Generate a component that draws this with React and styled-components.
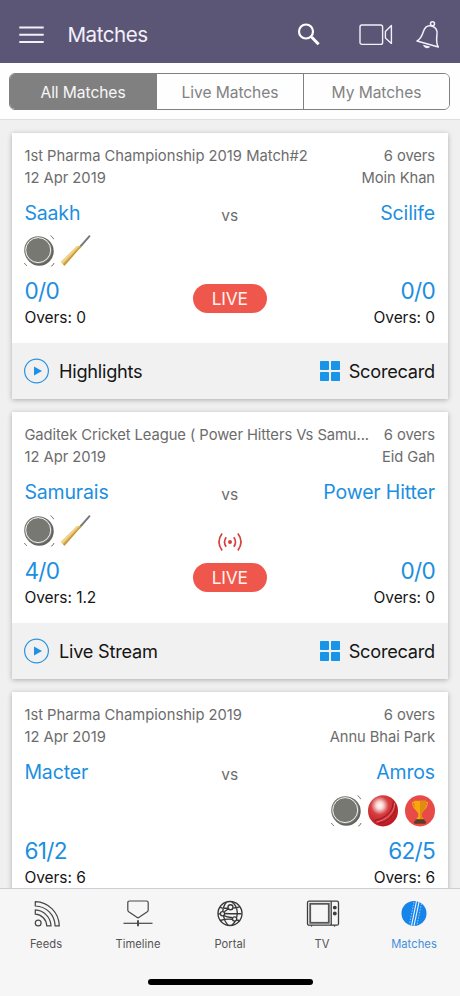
import React from "react";
import styled, { createGlobalStyle } from "styled-components";

const GlobalStyle = createGlobalStyle`
  * { box-sizing: border-box; }
  body { margin: 0; background: #f1f1f1; font-family: Inter, Roboto, sans-serif; }
`;

const Screen = styled.div`
  display: flex;
  flex-direction: column;
  width: 460px;
  height: 996px;
  overflow: hidden;
  background: #f0f0f0;
`;

const Header = styled.header`
  display: flex;
  align-items: center;
  flex: none;
  height: 63px;
  padding: 7px 19px 0 19px;
  background: #5c5676;
  color: #f4f0fb;
`;

const Title = styled.h1`
  flex: 1;
  margin: 0 0 0 23.5px;
  font-size: 20.6px;
  line-height: 26px;
  font-weight: 400;
  letter-spacing: -0.5px;
`;

const HeaderActions = styled.div`
  display: flex;
  align-items: center;
`;

const ActionIcon = styled.span`
  display: flex;
  margin-left: ${(p) => p.$gap}px;
`;

const FilterBar = styled.div`
  flex: none;
  height: 57px;
  padding: 10px 10px 0 9px;
  background: #fefefe;
  border-bottom: 1px solid #dedede;
`;

const Segments = styled.div`
  display: grid;
  grid-template-columns: 146px 147px 1fr;
  height: 37px;
  border: 1.5px solid #808080;
  border-radius: 6px;
  overflow: hidden;
`;

const Segment = styled.button`
  border: 0;
  border-left: ${(p) => (p.$first ? "0" : "1px solid #808080")};
  padding: 2px 0 0;
  font: 400 15.6px Inter, sans-serif;
  letter-spacing: -0.08px;
  background: ${(p) => (p.$active ? "#808080" : "#fefefe")};
  color: ${(p) => (p.$active ? "#f7f7f7" : "#828282")};
`;

const MatchList = styled.main`
  flex: 1;
  min-height: 0;
  overflow: hidden;
  display: flex;
  flex-direction: column;
  gap: 13.4px;
  padding: 12.7px 12px 0;
`;

const Card = styled.article`
  flex: none;
  height: 266.4px;
  display: flex;
  flex-direction: column;
  background: #fff;
  box-shadow: 0 1px 5px rgba(0, 0, 0, 0.28);
`;

const CardBody = styled.div`
  flex: 1;
  padding: 12px 13px 0 12.4px;
`;

const MetaRow = styled.div`
  display: flex;
  justify-content: space-between;
  height: 22px;
  line-height: 22px;
  font-size: 14.75px;
  letter-spacing: ${(p) => (p.$tight ? "-0.07px" : "-0.01px")};
  color: #6c6c6c;
  white-space: nowrap;

  span:last-child { letter-spacing: -0.08px; }
`;

const Versus = styled.div`
  display: grid;
  grid-template-columns: 1fr 74px 1fr;
  margin-top: 11px;
`;

const Side = styled.div`
  display: flex;
  flex-direction: column;
  align-items: ${(p) => (p.$right ? "flex-end" : "flex-start")};
`;

const Team = styled.div`
  height: 26px;
  line-height: 26px;
  font-size: 19.5px;
  letter-spacing: -0.15px;
  color: #1c8fe0;
  white-space: nowrap;
`;

const Badges = styled.div`
  display: flex;
  gap: 7px;
  height: 32px;
  margin: 9.500px 0 0 ${(p) => (p.$right ? "0" : "-0.6px")};
`;

const Score = styled.div`
  height: 30px;
  margin-top: 9px;
  line-height: 30px;
  font-size: 22.6px;
  letter-spacing: -0.7px;
  color: #1c8fe0;
`;

const Overs = styled.div`
  height: 22px;
  margin-top: 0.8px;
  line-height: 22px;
  font-size: 15.5px;
  letter-spacing: -0.05px;
  color: #161616;
`;

const Middle = styled.div`
  display: flex;
  flex-direction: column;
  align-items: center;
`;

const Vs = styled.div`
  margin-top: 4px;
  height: 24px;
  line-height: 24px;
  font-size: 15.5px;
  color: #6c6c6c;
`;

const SignalSlot = styled.div`
  display: flex;
  height: 56px;
  padding-top: 25px;
`;

const LivePill = styled.div`
  width: 74px;
  height: 29px;
  border-radius: 15px;
  background: #ef574d;
  color: #fff2ef;
  text-align: center;
  font-size: 17.4px;
  line-height: 29px;
  letter-spacing: -0.3px;
`;

const CardFooter = styled.footer`
  display: flex;
  align-items: center;
  justify-content: space-between;
  height: 56px;
  padding: 0 13px 0 12px;
  background: #f1f1f1;
`;

const FooterAction = styled.div`
  display: flex;
  align-items: center;
  gap: 9px;
  font-size: 18.2px;
  letter-spacing: -0.25px;
  color: #151515;
`;

const TabBar = styled.nav`
  flex: none;
  height: 108px;
  display: flex;
  flex-direction: column;
  align-items: center;
  background: #f6f6f7;
  border-top: 1px solid #cfcfd1;
  z-index: 1;
`;

const Tabs = styled.div`
  display: grid;
  grid-template-columns: repeat(5, 1fr);
  width: 460px;
  height: 90px;
`;

const Tab = styled.div`
  display: flex;
  flex-direction: column;
  align-items: center;
  padding-top: 11px;
  font-size: 11.2px;
  line-height: 16px;
  letter-spacing: 0.05px;
  color: ${(p) => (p.$active ? "#3f8fdb" : "#545454")};
  svg { margin-bottom: 8px; }
`;

const HomeIndicator = styled.div`
  width: 165px;
  height: 6px;
  border-radius: 3px;
  background: #000;
`;

const MenuIcon = () => (
  <svg width="25" height="20" viewBox="0 0 25 20" stroke="#f4f0fb" strokeWidth="2">
    <path d="M.3 2.5h24.4M.3 9.7h24.4M.3 17h24.4" />
  </svg>
);

const SearchIcon = () => (
  <svg width="24" height="24" viewBox="0 0 24 24" fill="none" stroke="#fff">
    <circle cx="9" cy="8.500" r="7" strokeWidth="2.200" />
    <path d="M14 13.500l1.800 1.800" strokeWidth="2.200" />
    <path d="M15 14.500l6.600 6.800" strokeWidth="3" />
  </svg>
);

const VideoIcon = () => (
  <svg width="34" height="24" viewBox="0 0 34 24" fill="none" stroke="#f4f0fb" strokeWidth="1.4" strokeLinejoin="round">
    <rect x="1" y="2" width="22.6" height="19.4" rx="2" />
    <path d="M32.4 2.6v17.8L26.4 15V8.4z" />
  </svg>
);

const BellIcon = () => (
  <svg width="26" height="30" viewBox="0 0 26 30" fill="none" stroke="#f4f0fb" strokeWidth="1.5" strokeLinejoin="round">
    <circle cx="17.5" cy="3.8" r="2" />
    <path d="M2 21C6 19 6.900 15.800 8.400 11.500c1.400-4.200 4.200-6.400 8.200-5.400 4 1 5.900 3.800 5.400 8.400-.5 4.700-1.300 8.500 1.300 12.500z" />
    <path d="M8 24.800c.8 4 6.300 4.400 7 1.700z" fill="#f4f0fb" stroke="none" />
  </svg>
);

const CoinBadge = () => (
  <svg width="30" height="32" viewBox="0 0 30 32" fill="none" overflow="visible">
    <circle cx="15.300" cy="16.300" r="14.400" fill="#62635f" />
    <circle cx="14.200" cy="15.200" r="14" fill="#777872" />
    <circle cx="14.200" cy="15.100" r="12.500" stroke="#f4f4f2" strokeWidth="1" />
    <path d="M26.500 .6q2.400 1.400 3.200 3.600M.4 28q.7 1.700 2.600 2.800M27.200 31.200q2.400-1 2.800-3.200" stroke="#777872" />
  </svg>
);

const BatBadge = () => (
  <svg width="30" height="32" viewBox="0 0 30 32" fill="none" overflow="visible">
    <path d="M18.500 12.500L28.500 1.200" stroke="#777" strokeWidth="1.900" strokeLinecap="round" />
    <path d="M20.800 11L3.500 30.800l-3.700-3.800L16 11z" fill="#dfb657" />
    <path d="M18 11.300L1.300 29l-1.500-2.100L16 11z" fill="#f1d48b" />
    <path d="M20.800 11L3.500 30.800l-1.300-1.200L19.400 11z" fill="#c49a46" />
  </svg>
);

const BallBadge = () => (
  <svg width="30" height="32" viewBox="0 0 30 32" fill="none">
    <defs>
      <radialGradient id="leather" cx=".39" cy=".33" r=".66">
        <stop offset="0" stopColor="#fff" />
        <stop offset=".18" stopColor="#f7d6d4" />
        <stop offset=".45" stopColor="#d73d40" />
        <stop offset="1" stopColor="#bd1821" />
      </radialGradient>
    </defs>
    <ellipse cx="15" cy="15.800" rx="15" ry="15.600" fill="url(#leather)" />
    <path d="M25.300 6.500C25.500 16 17 23.500 6.600 25.500" stroke="#931720" />
    <path d="M26.600 8C27 18 18 25.300 8.500 27" stroke="#e98b8b" strokeWidth=".8" />
    <path d="M28 10C28.200 19.500 20 27 10.500 28.500" stroke="#931720" strokeWidth=".9" />
  </svg>
);

const TrophyBadge = () => (
  <svg width="30" height="32" viewBox="0 0 30 32" fill="none">
    <ellipse cx="15" cy="15.800" rx="15" ry="15.600" fill="#e84a47" />
    <path d="M9.500 7.300H7.600c.2 4 1.700 7 5.300 8.300M20.500 7.300h1.900c-.2 4-1.700 7-5.300 8.300" stroke="#f0a318" strokeWidth="1.300" />
    <path d="M9 5.800h12c0 6-1.300 10.300-4.300 12.200v3.400l2.500 3h-8.400l2.500-3V18C10.300 16.100 9 11.800 9 5.800z" fill="#f5a70b" />
    <path d="M15 5.800h6c0 6-1.300 10.300-4.300 12.200v3.400l2.500 3H15z" fill="#df8c12" />
    <path d="M10.500 24.300h9v1.700h1.300v2.700H9.200V26h1.300z" fill="#5d3b2c" />
  </svg>
);

const SignalIcon = () => (
  <svg width="26" height="20" viewBox="0 0 26 20" fill="none" stroke="#d8403e" strokeWidth="1.700">
    <circle cx="13" cy="10" r="2" fill="#d8403e" stroke="none" />
    <path d="M9.200 5.200Q5.800 10 9.200 14.800M16.800 5.200Q20.200 10 16.800 14.800M5.100 1.600Q-1.200 10 5.100 18.400M20.900 1.600Q27.200 10 20.900 18.400" />
  </svg>
);

const PlayIcon = () => (
  <svg width="26" height="26" viewBox="0 0 26 26">
    <circle cx="12.500" cy="13" r="11.900" fill="none" stroke="#2a94df" strokeWidth="1.200" />
    <path d="M10 8.400L18 13l-8 4.600z" fill="#1c91e6" />
  </svg>
);

const GridIcon = () => (
  <svg width="20" height="20" viewBox="0 0 20 20" fill="#1895e8">
    <rect width="9" height="9" rx=".8" />
    <rect x="11" width="9" height="9" rx=".8" />
    <rect y="11" width="9" height="9" rx=".8" />
    <rect x="11" y="11" width="9" height="9" rx=".8" />
  </svg>
);

const FeedsIcon = () => (
  <svg width="26" height="28" viewBox="0 0 26 28" fill="none" overflow="visible" stroke="#484848" strokeWidth="1.250" strokeLinejoin="round">
    <g transform="translate(1 0)">
      <circle cx="4.200" cy="23" r="2.900" />
      <path d="M1.300 1.600C14.500 2 25 12.500 25.300 25.900h-4.200C20.800 14.800 12.400 6.300 1.300 6z" />
      <path d="M1.300 9.900c8.500.4 15.400 7.400 15.700 16h-4.200C12.500 19.500 7.700 14.500 1.300 14.200z" />
    </g>
  </svg>
);

const TimelineIcon = () => (
  <svg width="30" height="28" viewBox="0 0 30 28" fill="none" stroke="#484848" strokeWidth="1.200" strokeLinejoin="round">
    <path d="M6.500 1h17q1.700 0 1.700 1.700v7.300q0 1-.9 1.700L15 18 5.700 11.700q-.9-.7-.9-1.700V2.700q0-1.700 1.700-1.700z" />
    <path d="M.5 23.300h29" />
    <path d="M15 20.300v6" strokeWidth="1.900" />
  </svg>
);

const PortalIcon = () => (
  <svg width="26" height="28" viewBox="0 0 26 28" fill="none" stroke="#383838" strokeWidth="1.350">
    <circle cx="13" cy="13.500" r="12" />
    <path d="M9.500 2.300C7 5 6 8.500 5.700 12M6.300 15.300C7 19 8.500 22.500 11 25.400M14.800 1.900c2.500 1.700 5.200 5.700 5.500 10.800-.1 5.500-2.200 9.500-5.300 12.500M3 7.300c2 .8 5 1.100 8 .8M16.300 8c2.600 0 5-.4 6.800-1.300M1 13.800h2.500M7.500 13.500l5 .2h12M3.200 20.500c4-1.300 8-1.500 12-1.200M19.500 20c1.300.1 2.300.4 3.300.8M7.300 11.800l4.200-3M7.200 15.500c3 2.300 5.700 1.300 8.300 2.300" />
    <circle cx="13.500" cy="7.200" r="2.500" fill="#f6f6f7" />
    <circle cx="5.500" cy="13.700" r="2.100" fill="#f6f6f7" />
    <circle cx="17.600" cy="19" r="2.100" fill="#f6f6f7" />
  </svg>
);

const TvIcon = () => (
  <svg width="33" height="28" viewBox="0 0 33 28" fill="none" overflow="visible" stroke="#3d3d3d">
    <g transform="translate(.5 0)" strokeWidth="1.300">
      <rect x="1" y="1.200" width="31" height="24" rx="1.500" />
      <rect x="3.700" y="3.800" width="18.600" height="19" stroke="#555" strokeWidth="1.800" />
      <path d="M24.700 1.200v24" />
      <path d="M5.300 25.200l-.5 1.300M27.700 25.200l.5 1.300" />
      <circle cx="28.300" cy="7.600" r="1.300" fill="#3d3d3d" />
      <circle cx="28.300" cy="13.500" r="1.300" fill="#3d3d3d" />
    </g>
  </svg>
);

const MatchesIcon = () => (
  <svg width="26" height="28" viewBox="0 0 26 28" fill="none">
    <circle cx="13" cy="13.400" r="12.500" fill="#1684e8" />
    <path d="M15.500 1.200l-5 24.500M18 2.100l-5 23.700" stroke="#eaf4ff" strokeWidth="1.100" />
    <path d="M13 2l-4.600 22.500M20.500 3.500l-4.500 21.500" stroke="#b6dcff" strokeWidth=".8" strokeDasharray="1.500 1.300" />
  </svg>
);

const badgeIcons = { coin: CoinBadge, bat: BatBadge, ball: BallBadge, trophy: TrophyBadge };

const matches = [
  {
    name: "1st Pharma Championship 2019 Match#2", date: "12 Apr 2019", overs: "6 overs", ground: "Moin Khan",
    home: { team: "Saakh", badges: ["coin", "bat"], score: "0/0", overs: "0" },
    away: { team: "Scilife", badges: [], score: "0/0", overs: "0" },
    live: true, video: "Highlights",
  },
  {
    name: "Gaditek Cricket League ( Power Hitters Vs Samu...", date: "12 Apr 2019", overs: "6 overs", ground: "Eid Gah",
    home: { team: "Samurais", badges: ["coin", "bat"], score: "4/0", overs: "1.2" },
    away: { team: "Power Hitter", badges: [], score: "0/0", overs: "0" },
    live: true, streaming: true, video: "Live Stream",
  },
  {
    name: "1st Pharma Championship 2019", date: "12 Apr 2019", overs: "6 overs", ground: "Annu Bhai Park",
    home: { team: "Macter", badges: [], score: "61/2", overs: "6" },
    away: { team: "Amros", badges: ["coin", "ball", "trophy"], score: "62/5", overs: "6" },
  },
];

const tabs = [
  { label: "Feeds", Icon: FeedsIcon },
  { label: "Timeline", Icon: TimelineIcon },
  { label: "Portal", Icon: PortalIcon },
  { label: "TV", Icon: TvIcon },
  { label: "Matches", Icon: MatchesIcon, active: true },
];

function TeamSide({ side, right }) {
  return (
    <Side $right={right}>
      <Team>{side.team}</Team>
      <Badges $right={right}>
        {side.badges.map((name) => {
          const Icon = badgeIcons[name];
          return <Icon key={name} />;
        })}
      </Badges>
      <Score>{side.score}</Score>
      <Overs>Overs: {side.overs}</Overs>
    </Side>
  );
}

function MatchCard({ match }) {
  return (
    <Card>
      <CardBody>
        <MetaRow $tight={match.name.length > 40}><span>{match.name}</span><span>{match.overs}</span></MetaRow>
        <MetaRow><span>{match.date}</span><span>{match.ground}</span></MetaRow>
        <Versus>
          <TeamSide side={match.home} />
          <Middle>
            <Vs>vs</Vs>
            <SignalSlot>{match.streaming && <SignalIcon />}</SignalSlot>
            {match.live && <LivePill>LIVE</LivePill>}
          </Middle>
          <TeamSide side={match.away} right />
        </Versus>
      </CardBody>
      {match.video && (
        <CardFooter>
          <FooterAction><PlayIcon />{match.video}</FooterAction>
          <FooterAction><GridIcon />Scorecard</FooterAction>
        </CardFooter>
      )}
    </Card>
  );
}

export default function App() {
  return (
    <Screen>
      <GlobalStyle />
      <Header>
        <MenuIcon />
        <Title>Matches</Title>
        <HeaderActions>
          <ActionIcon $gap={0}><SearchIcon /></ActionIcon>
          <ActionIcon $gap={38}><VideoIcon /></ActionIcon>
          <ActionIcon $gap={22}><BellIcon /></ActionIcon>
        </HeaderActions>
      </Header>
      <FilterBar>
        <Segments>
          <Segment $first $active>All Matches</Segment>
          <Segment>Live Matches</Segment>
          <Segment>My Matches</Segment>
        </Segments>
      </FilterBar>
      <MatchList>
        {matches.map((match, i) => <MatchCard key={i} match={match} />)}
      </MatchList>
      <TabBar>
        <Tabs>
          {tabs.map(({ label, Icon, active }) => (
            <Tab key={label} $active={active}><Icon />{label}</Tab>
          ))}
        </Tabs>
        <HomeIndicator />
      </TabBar>
    </Screen>
  );
}
